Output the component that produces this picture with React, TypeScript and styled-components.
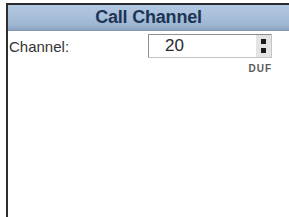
import React from 'react'
import styled, { createGlobalStyle } from 'styled-components'

const GlobalStyle = createGlobalStyle`
  html, body {
    margin: 0;
    padding: 0;
    background: #ffffff;
  }
  body {
    font-family: 'Liberation Sans', Arial, sans-serif;
  }
`

const Page = styled.div`
  width: 289px;
  height: 217px;
  padding: 3px 0 0 6px;
  box-sizing: border-box;
  background: #ffffff;
  overflow: hidden;
`

const Frame = styled.div`
  height: 100%;
  border-left: 2px solid #2e2e2e;
  border-top: 2px solid #2a2a2e;
  display: flex;
  flex-direction: column;
`

const Header = styled.div`
  height: 25px;
  display: flex;
  align-items: center;
  justify-content: center;
  background: linear-gradient(#b4c9e2, #9fb6d3 80%, #8ea3bf);
  border-bottom: 1px solid #8196b2;
  color: #1d3554;
  font-size: 18px;
  font-weight: bold;
  letter-spacing: -0.2px;
`

const Body = styled.div`
  padding: 3px 17px 0 1px;
  display: flex;
  flex-direction: column;
`

const Row = styled.div`
  display: flex;
  align-items: center;
  justify-content: space-between;
`

const Label = styled.span`
  font-size: 15px;
  color: #333333;
`

const Field = styled.div`
  width: 124px;
  height: 24px;
  display: flex;
  box-sizing: border-box;
  border: 1px solid #c4c4c4;
  border-top-color: #8f8f8f;
  border-left-color: #8f8f8f;
`

const Value = styled.div`
  flex: 1;
  padding-left: 16px;
  display: flex;
  align-items: center;
  font-size: 17px;
  color: #2a2a2a;
`

const Spinner = styled.div`
  width: 15px;
  background: #e4e4e4;
  display: flex;
  flex-direction: column;
  align-items: center;
  justify-content: center;
  gap: 4px;
`

const Arrow = styled.div`
  width: 5px;
  height: 5px;
  background: #1a1a1a;
`

const Unit = styled.div`
  align-self: flex-end;
  margin-top: 5px;
  font-size: 10px;
  font-weight: bold;
  letter-spacing: 1px;
  color: #5a5a5a;
`

export default function App() {
  return (
    <>
      <GlobalStyle />
      <Page>
        <Frame>
          <Header>Call Channel</Header>
          <Body>
            <Row>
              <Label>Channel:</Label>
              <Field>
                <Value>20</Value>
                <Spinner>
                  <Arrow />
                  <Arrow />
                </Spinner>
              </Field>
            </Row>
            <Unit>DUF</Unit>
          </Body>
        </Frame>
      </Page>
    </>
  )
}
